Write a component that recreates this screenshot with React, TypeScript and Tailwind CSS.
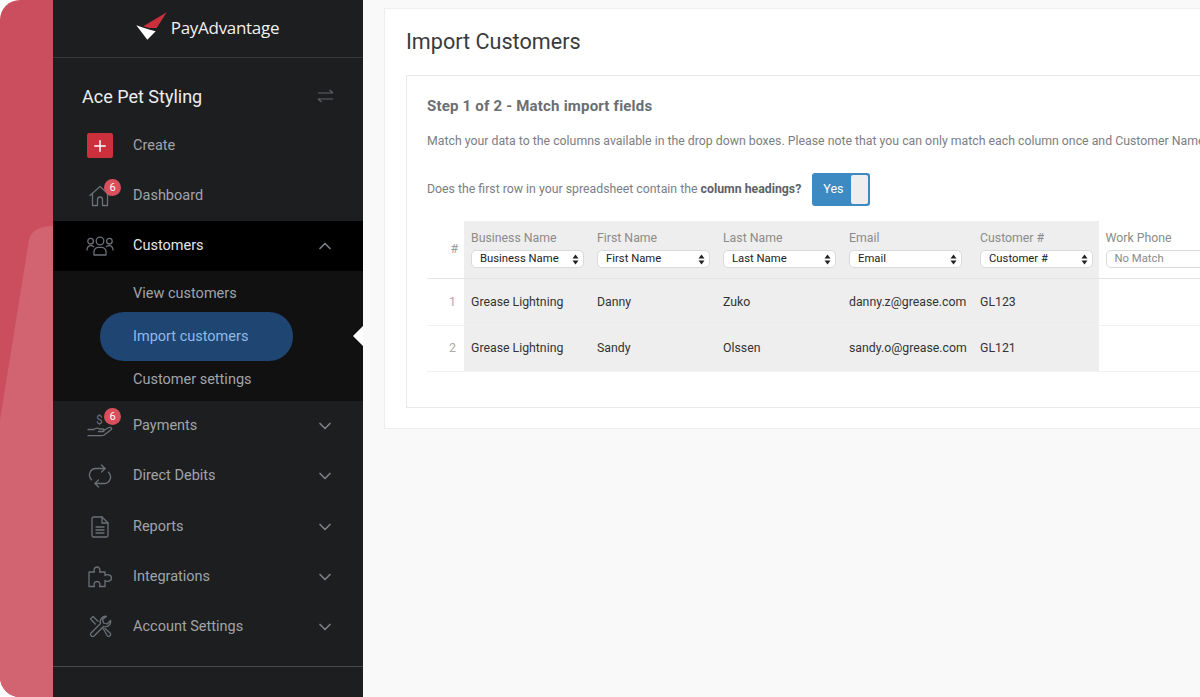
import { ChevronDown, ChevronUp, Plus } from "lucide-react";
import type { ReactNode } from "react";

const font = "font-['Roboto','Liberation_Sans',sans-serif]";

function Badge() {
  return (
    <span className="absolute left-[18px] top-[-6px] flex h-[17px] w-[17px] items-center justify-center rounded-full bg-[#d9505c] text-[11px] leading-none text-white">
      6
    </span>
  );
}

const stroke = {
  fill: "none",
  stroke: "#6b7076",
  strokeWidth: 1.3,
  strokeLinecap: "round" as const,
  strokeLinejoin: "round" as const,
};

function HomeIcon() {
  return (
    <svg width="22" height="22" viewBox="0 0 22 22" {...stroke}>
      <path d="M1 10.5 11 1.5l10 9M3.5 9v11.5h5v-6a2.5 2.5 0 0 1 5 0v6h5V9" />
    </svg>
  );
}

function PeopleIcon() {
  return (
    <svg width="28" height="20" viewBox="0 0 28 20" {...stroke}>
      <circle cx="14" cy="5" r="3.8" />
      <circle cx="4.6" cy="5.2" r="2.8" />
      <circle cx="23.4" cy="5.2" r="2.8" />
      <path d="M8 19v-3.4a4.6 4.6 0 0 1 4.6-4.3h2.8a4.6 4.6 0 0 1 4.6 4.3V19z" />
      <path d="M1 14c.2-3 1.6-4.3 4-4.3 1 0 2 .3 2.6.9M27 14c-.2-3-1.6-4.3-4-4.3-1 0-2 .3-2.6.9" />
    </svg>
  );
}

function HandIcon() {
  return (
    <svg width="26" height="24" viewBox="0 0 26 24" {...stroke}>
      <path d="M1 15.5h6c1.500-1.500 4-1.500 5.500-.5h3.500c1.500 0 1.500 2.500 0 2.500h-4.500" />
      <path d="M16.500 16.500 22 13.500c2-1 3.500 1 2 2.300L17 21c-.8.5-1.500.7-2.500.7H1" />
      <text x="9" y="10" fontSize="12" fill="#6b7076" stroke="none" fontFamily="Roboto">$</text>
    </svg>
  );
}

function LoopIcon() {
  return (
    <svg width="24" height="24" viewBox="0 0 24 24" {...stroke}>
      <path d="M13.500 1l3.500 3.500-3.500 3.500" />
      <path d="M17 4.500H8a6.500 6.500 0 0 0-4.500 11.200" />
      <path d="M10.500 23 7 19.500l3.500-3.500" />
      <path d="M7 19.500h9a6.500 6.500 0 0 0 4.500-11.200" />
    </svg>
  );
}

function DocIcon() {
  return (
    <svg width="18" height="22" viewBox="0 0 18 22" {...stroke}>
      <path d="M2.500 1h8.500l6 6v12.500a1.500 1.500 0 0 1-1.500 1.500h-13A1.500 1.500 0 0 1 1 19.500v-17A1.500 1.500 0 0 1 2.500 1z" />
      <path d="M11 1v6h6M5 11h8M5 14h8M5 17h8" />
    </svg>
  );
}

function PuzzleIcon() {
  return (
    <svg width="25" height="22" viewBox="0 0 25 22" {...stroke}>
      <path d="M1 6H6.500C5.500 4.500 6 1 9 1s3.500 3.500 2.500 5H17V9.500C18.500 8 23.500 8.500 23.500 12S18.500 16 17 14.500V20.500H11.500C12.500 18.500 12 15.500 9 15.500S5.500 18.500 6.500 20.500H1Z" />
    </svg>
  );
}

function ToolsIcon() {
  return (
    <svg width="23" height="23" viewBox="0 0 23 23" {...stroke}>
      <path d="M17.500 1.300a5.500 5.500 0 0 0-6 7.200L1.800 18.200a2.200 2.200 0 0 0 3 3l9.700-9.700a5.500 5.500 0 0 0 7.200-6L18 9l-3.500-1-1-3.500z" />
      <path d="M9 6.300 4 1.500 1.500 4l4.800 5M13.800 13l4.500 7.800a1.500 1.500 0 0 0 2.200.3l.8-.8a1.500 1.500 0 0 0-.2-2.200L16 13.500" />
    </svg>
  );
}

function NavRow({
  icon,
  label,
  chevron,
  active,
}: {
  icon: ReactNode;
  label: string;
  chevron?: "up" | "down";
  active?: boolean;
}) {
  return (
    <div className={`flex h-[50.2px] items-center pl-[33px] pr-[28px] ${active ? "bg-black" : ""}`}>
      <div className="relative flex w-[28px] items-center justify-center">{icon}</div>
      <span className={`ml-[19px] flex-1 text-[14.500px] ${active ? "text-[#e4e6e8]" : "text-[#a0a4a9]"}`}>
        {label}
      </span>
      {chevron === "up" && <ChevronUp size={20} strokeWidth={2} className="text-[#7d8186]" />}
      {chevron === "down" && <ChevronDown size={20} strokeWidth={2} className="text-[#7d8186]" />}
    </div>
  );
}

function Sidebar() {
  return (
    <aside className="relative flex h-full w-[310px] shrink-0 flex-col bg-[#1d1e20]">
      <div className="flex h-[58px] items-center justify-center border-b border-[#37383b] pb-[2px] pl-[1px] pr-[3px]">
        <svg className="-mt-[3px]" width="34" height="30" viewBox="0 0 34 30">
          <path d="M31.700 1.300 8.300 15.300 14 17 21.700 17z" fill="#c9303c" />
          <path d="M1.300 14.300 8.500 16.800 14 18.500 20.700 20.300 12.300 28.700z" fill="#ffffff" />
        </svg>
        <span className="ml-[2px] font-['Open_Sans',sans-serif] text-[17px] font-medium tracking-[-0.3px] text-[#f1f1f1]">
          PayAdvantage
        </span>
      </div>

      <div className="flex h-[62.500px] shrink-0 items-center justify-between pl-[29px] pr-[29px] pt-[15px]">
        <span className="text-[18px] text-[#eeeeee]">Ace Pet Styling</span>
        <svg className="-mt-[1px]" width="17" height="14" viewBox="0 0 17 14" fill="none" stroke="#5e6268" strokeWidth="1.200">
          <path d="M1 4h15M12.500 1 16 4M16 10H1M4.500 13 1 10" />
        </svg>
      </div>

      <div>
        <NavRow
          label="Create"
          icon={
            <span className="flex h-[25px] w-[26px] items-center justify-center rounded-[2px] bg-[#cb303c]">
              <Plus size={18} strokeWidth={2} className="text-white" />
            </span>
          }
        />
        <NavRow
          label="Dashboard"
          icon={
            <>
              <HomeIcon />
              <Badge />
            </>
          }
        />
        <NavRow label="Customers" icon={<PeopleIcon />} chevron="up" active />
        <div className="relative flex h-[130px] flex-col bg-[#111112] text-[14.500px] text-[#a0a4a9]">
          <div className="flex h-[41px] items-center pl-[80px] pt-[4px]">View customers</div>
          <div className="ml-[47px] flex h-[49px] w-[193px] items-center rounded-[24px] bg-[#1f4573] pl-[33px] text-[#8fb9e8]">
            Import customers
          </div>
          <div className="flex h-[37px] items-center pl-[80px]">Customer settings</div>
          <span className="absolute right-0 top-[55px] h-0 w-0 border-y-[10px] border-r-[10px] border-y-transparent border-r-white" />
        </div>
        <NavRow
          label="Payments"
          chevron="down"
          icon={
            <>
              <HandIcon />
              <Badge />
            </>
          }
        />
        <NavRow label="Direct Debits" chevron="down" icon={<LoopIcon />} />
        <NavRow label="Reports" chevron="down" icon={<DocIcon />} />
        <NavRow label="Integrations" chevron="down" icon={<PuzzleIcon />} />
        <NavRow label="Account Settings" chevron="down" icon={<ToolsIcon />} />
      </div>
      <div className="mt-[14px] border-t border-[#47484b]" />
    </aside>
  );
}

function SelectBox({ label, muted }: { label: string; muted?: boolean }) {
  return (
    <div className="flex h-[18px] w-[113px] items-center justify-between rounded-[5px] border border-[#d8dae0] bg-white pl-[8px] pr-[4px] text-[11.300px]">
      <span className={muted ? "text-[#8a8a8a]" : "text-[#222222]"}>{label}</span>
      {!muted && (
        <svg width="7" height="11" viewBox="0 0 7 11" fill="#222222">
          <path d="M3.500 0.500 6.500 4.500H0.500zM3.500 10.500 0.500 6.500H6.500z" />
        </svg>
      )}
    </div>
  );
}

const columns = [
  { head: "Business Name", width: "w-[126px]", rows: ["Grease Lightning", "Grease Lightning"] },
  { head: "First Name", width: "w-[126px]", rows: ["Danny", "Sandy"] },
  { head: "Last Name", width: "w-[126px]", rows: ["Zuko", "Olssen"] },
  { head: "Email", width: "w-[131px]", rows: ["danny.z@grease.com", "sandy.o@grease.com"] },
  { head: "Customer #", width: "w-[126px]", rows: ["GL123", "GL121"] },
];

function ImportTable() {
  return (
    <div className="mt-[15px] w-[900px] text-[12.300px]">
      <div className="flex h-[58px] border-b border-[#e4e4e6]">
        <div className="flex w-[37px] shrink-0 items-center justify-end pr-[6px] text-[#999999]">#</div>
        {columns.map((c) => (
          <div key={c.head} className={`${c.width} shrink-0 bg-[#eeeeee] pl-[7px] pt-[10px]`}>
            <div className="mb-[5px] leading-[14px] text-[#8b8b8b]">{c.head}</div>
            <SelectBox label={c.head} />
          </div>
        ))}
        <div className="pl-[6.500px] pt-[10px]">
          <div className="mb-[5px] leading-[14px] text-[#8b8b8b]">Work Phone</div>
          <SelectBox label="No Match" muted />
        </div>
      </div>
      {[0, 1].map((i) => (
        <div key={i} className="flex h-[46.500px] border-b border-[#f1f1f2]">
          <div className="flex w-[37px] shrink-0 items-center justify-end pr-[8px] text-[#aaaaaa]">{i + 1}</div>
          {columns.map((c) => (
            <div key={c.head} className={`${c.width} flex shrink-0 items-center bg-[#eeeeee] pl-[7px] text-[#333333]`}>
              {c.rows[i]}
            </div>
          ))}
        </div>
      ))}
    </div>
  );
}

export default function App() {
  return (
    <div className={`flex h-[697px] w-[1200px] overflow-hidden bg-white ${font}`}>
      <div className="relative h-full w-[53px] shrink-0 overflow-hidden rounded-l-[20px] bg-[#cb4e5f]">
        <svg className="absolute left-0 top-0" width="53" height="697" viewBox="0 0 53 697">
          <path d="M0 420 29 240c2-10 12-14 24-14v471H0z" fill="#d26472" />
        </svg>
      </div>
      <Sidebar />
      <main className="h-full flex-1 overflow-hidden bg-[#f9f9f9] pl-[21px] pt-[8px]">
        <section className="h-[421px] w-[900px] border border-[#efefef] bg-white pl-[21px] pt-[18px]">
          <h1 className="text-[21.600px] leading-[30px] text-[#3a3a3c]">Import Customers</h1>
          <div className="mt-[18px] h-[333px] w-[900px] border border-[#e9e9ea] pl-[20px] pt-[20px]">
            <h2 className="text-[15px] font-bold leading-[20px] tracking-[0.2px] text-[#6b6e73]">
              Step 1 of 2 - Match import fields
            </h2>
            <p className="mt-[16px] whitespace-nowrap text-[12.300px] leading-[18px] text-[#7c7e82]">
              Match your data to the columns available in the drop down boxes. Please note that you can only match each column once and Customer Name is required.
            </p>
            <div className="mt-[23px] flex h-[33px] items-center text-[12.300px] text-[#7c7e82]">
              <span>
                Does the first row in your spreadsheet contain the{" "}
                <strong className="font-bold text-[#5f6165]">column headings?</strong>
              </span>
              <div className="ml-[11px] flex h-[33px] w-[58px] items-center justify-between rounded-[3px] bg-[#3d89c2] p-[2px] pl-[11px] text-[12.500px] text-white">
                Yes
                <span className="h-[29px] w-[17px] rounded-[2px] bg-[#eeeeee]" />
              </div>
            </div>
            <ImportTable />
          </div>
        </section>
      </main>
    </div>
  );
}
